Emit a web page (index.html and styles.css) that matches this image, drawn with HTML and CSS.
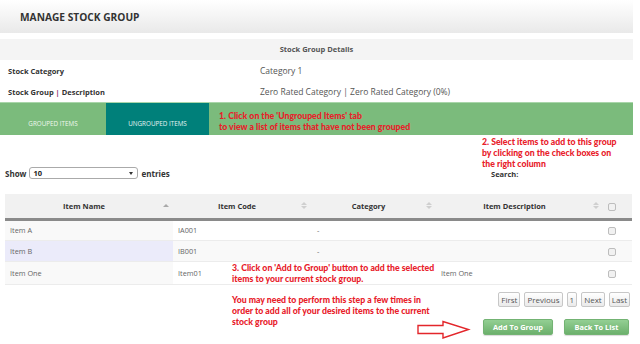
FILE: index.html
```html
<!doctype html>
<html>
<head>
    <meta charset="UTF-8">
    <title>Manage Stock Group</title>
    <link rel="stylesheet" href="styles.css">
</head>
<body>
<div class="page">
    <header class="titlebar">
        <h1>MANAGE STOCK GROUP</h1>
    </header>

    <section class="details">
        <div class="details-head">Stock Group Details</div>
        <dl class="info">
            <dt>Stock Category</dt>
            <dd>Category 1</dd>
            <dt>Stock Group <span class="sep">|</span> Description</dt>
            <dd>Zero Rated Category | Zero Rated Category (0%)</dd>
        </dl>
    </section>

    <nav class="tabs">
        <a class="tab">GROUPED ITEMS</a>
        <a class="tab active">UNGROUPED ITEMS</a>
        <p class="note note-tab">1. Click on the 'Ungrouped Items' tab<br>to view a list of items that have not been grouped</p>
    </nav>

    <div class="controls">
        <label class="length">Show <span class="select">10<i class="caret"></i></span> entries</label>
        <div class="search-col">
            <p class="note">2. Select items to add to this group<br>by clicking on the check boxes on<br>the right column</p>
            <label class="search">Search:</label>
        </div>
    </div>

    <table class="grid">
        <colgroup>
            <col style="width:168px">
            <col style="width:138px">
            <col style="width:125px">
            <col style="width:167px">
            <col style="width:29px">
        </colgroup>
        <thead>
            <tr>
                <th><div class="th-in"><span class="th-text">Item Name</span><span class="sort asc"></span></div></th>
                <th><div class="th-in"><span class="th-text">Item Code</span><span class="sort both"></span></div></th>
                <th><div class="th-in"><span class="th-text">Category</span><span class="sort both"></span></div></th>
                <th><div class="th-in"><span class="th-text">Item Description</span><span class="sort both"></span></div></th>
                <th class="chk-col"><span class="chk"></span></th>
            </tr>
        </thead>
        <tbody>
            <tr class="odd">
                <td class="sorted">Item A</td>
                <td>IA001</td>
                <td>-</td>
                <td></td>
                <td class="chk-col"><span class="chk"></span></td>
            </tr>
            <tr class="even">
                <td class="sorted">Item B</td>
                <td>IB001</td>
                <td>-</td>
                <td></td>
                <td class="chk-col"><span class="chk"></span></td>
            </tr>
            <tr class="odd">
                <td class="sorted">Item One</td>
                <td>Item01</td>
                <td></td>
                <td>Item One</td>
                <td class="chk-col"><span class="chk"></span></td>
            </tr>
        </tbody>
    </table>

    <div class="pager">
        <a class="pg">First</a>
        <a class="pg">Previous</a>
        <a class="pg">1</a>
        <a class="pg">Next</a>
        <a class="pg">Last</a>
    </div>

    <div class="actions">
        <a class="btn">Add To Group</a>
        <a class="btn">Back To List</a>
    </div>

    <div class="note note-3">
        <p>3. Click on 'Add to Group' button to add the selected<br>items to your current stock group.</p>
        <p>You may need to perform this step a few times in<br>order to add all of your desired items to the current<br>stock group</p>
    </div>

    <svg class="arrow" width="54" height="20" viewBox="0 0 54 20">
        <polygon points="1,5.5 26,5.5 26,1.5 51.5,9.5 26,18 26,13.5 1,13.5" fill="#fff" stroke="#e3262b" stroke-width="1.4"/>
    </svg>
</div>
</body>
</html>
```

FILE: styles.css
```css
* {
    box-sizing: border-box;
}
body {
    margin: 0;
    font-family: "Open Sans", "Liberation Sans", sans-serif;
    color: #555;
    background: #fff;
}
p {
    margin: 0;
}
.page {
    position: relative;
    width: 633px;
    height: 344px;
}

/* title */
.titlebar {
    height: 33px;
    padding-left: 20px;
    display: flex;
    align-items: center;
    background: linear-gradient(#ffffff, #e9e9e9);
}
.titlebar h1 {
    margin: 0;
    font-size: 10.2px;
    font-weight: 700;
    color: #333;
}

/* details */
.details {
    margin-top: 6px;
}
.details-head {
    height: 21px;
    line-height: 21px;
    background: #f4f4f4;
    text-align: center;
    font-size: 7.5px;
    font-weight: 700;
    color: #555;
}
.info {
    display: grid;
    grid-template-columns: 260px 1fr;
    grid-auto-rows: 21px;
    margin: 0;
    align-items: center;
}
.info dt {
    padding-left: 8px;
    font-size: 7.5px;
    font-weight: 700;
    color: #333;
}
.info dd {
    margin: 0;
    font-size: 8.5px;
    color: #555;
}
.sep {
    color: #8b2f6f;
}

/* tabs */
.tabs {
    display: flex;
    height: 33px;
    background: #7bbb7c;
    border-top: 1px solid #a9d6aa;
}
.tab {
    display: flex;
    align-items: center;
    justify-content: center;
    padding-top: 9px;
    font-size: 6.3px;
    color: #eef7ee;
}
.tab:first-child {
    width: 106px;
}
.tab.active {
    width: 103px;
    background: #00807a;
    color: #e6f3f2;
}
.note {
    font-family: Lato, "Liberation Sans", sans-serif;
    font-weight: 900;
    font-size: 8.7px;
    color: #e8202a;
    white-space: nowrap;
}
.note-tab {
    margin-left: 10px;
    padding-top: 8px;
    line-height: 10.5px;
}

/* controls */
.controls {
    display: flex;
    justify-content: space-between;
    align-items: flex-end;
    height: 59px;
    padding-bottom: 15px;
}
.length {
    display: flex;
    align-items: center;
    gap: 3px;
    padding-left: 5px;
    font-size: 8px;
    font-weight: 700;
    color: #333;
}
.select {
    display: flex;
    align-items: center;
    justify-content: space-between;
    width: 109px;
    height: 12px;
    padding: 0 4px 0 3px;
    border: 1px solid #aaa;
    border-radius: 3px;
    background: #fff;
    font-size: 7.5px;
    color: #222;
}
.caret {
    width: 0;
    height: 0;
    border-left: 2px solid transparent;
    border-right: 2px solid transparent;
    border-top: 3px solid #333;
}
.search-col {
    width: 151px;
    display: flex;
    flex-direction: column;
}
.search-col .note {
    line-height: 11px;
    margin-bottom: 0;
}
.search {
    padding-left: 9px;
    font-size: 7.5px;
    font-weight: 700;
    color: #333;
}

/* table */
.grid {
    margin-left: 5px;
    width: 627px;
    border-collapse: collapse;
    table-layout: fixed;
}
.grid th {
    height: 25px;
    padding: 0 4px 0 0;
    background: #f1f1f1;
    border-bottom: 3px solid #8a8a8a;
    font-size: 7.5px;
    font-weight: 700;
    color: #333;
}
.th-in {
    display: flex;
    align-items: center;
}
.th-text {
    flex: 1;
    text-align: center;
}
.sort {
    width: 6px;
    height: 8px;
    position: relative;
}
.sort.asc::before {
    content: "";
    position: absolute;
    left: 0;
    top: 2px;
    border-left: 3px solid transparent;
    border-right: 3px solid transparent;
    border-bottom: 3px solid #a9a9a9;
}
.sort.both::before,
.sort.both::after {
    content: "";
    position: absolute;
    left: 0;
    border-left: 3px solid transparent;
    border-right: 3px solid transparent;
}
.sort.both::before {
    top: 0;
    border-bottom: 3px solid #cfcfcf;
}
.sort.both::after {
    top: 4px;
    border-top: 3px solid #cfcfcf;
}
.grid td {
    height: 21px;
    padding: 0 5px;
    border-bottom: 1px solid #ececec;
    font-size: 7.3px;
    color: #666;
    background: #fff;
}
.grid tr:last-child td {
    height: 23px;
}
.grid td:nth-child(3) {
    padding-left: 6px;
}
.grid tr.odd td.sorted {
    background: #f9f9f9;
}
.grid tr.even td {
    background: #f9f9f9;
}
.grid tr.even td.sorted {
    background: #ebebfa;
}
.grid .chk-col {
    padding: 0 0 0 5px;
    text-align: left;
}
.chk {
    display: inline-block;
    width: 8px;
    height: 8px;
    border: 1px solid #bdbdbd;
    border-radius: 2px;
    background: #f1f1f1;
    vertical-align: middle;
}

/* pager */
.pager {
    display: flex;
    justify-content: flex-end;
    gap: 4px;
    margin-top: 7px;
    padding-right: 3px;
}
.pg {
    height: 15px;
    padding: 0 2px;
    line-height: 13px;
    border: 1px solid #c7c7c7;
    border-radius: 2px;
    background: linear-gradient(#ffffff, #eaeaea);
    font-size: 8px;
    color: #555;
}

/* action buttons */
.actions {
    display: flex;
    justify-content: flex-end;
    gap: 11px;
    margin-top: 12px;
    padding-right: 4px;
}
.btn {
    height: 16px;
    line-height: 14px;
    text-align: center;
    border: 1px solid #73b373;
    border-radius: 2px;
    background: linear-gradient(#93cf93, #6cb06c);
    box-shadow: 0 1px 1px rgba(0, 0, 0, 0.15);
    font-size: 7.4px;
    font-weight: 700;
    color: #fff;
}
.btn:first-child {
    width: 70px;
}
.btn:last-child {
    width: 65px;
}

/* overlay callouts */
.note-3 {
    position: absolute;
    left: 232px;
    top: 262px;
    line-height: 11.3px;
}
.note-3 p + p {
    margin-top: 9px;
}
.arrow {
    position: absolute;
    left: 417px;
    top: 320px;
}
```
